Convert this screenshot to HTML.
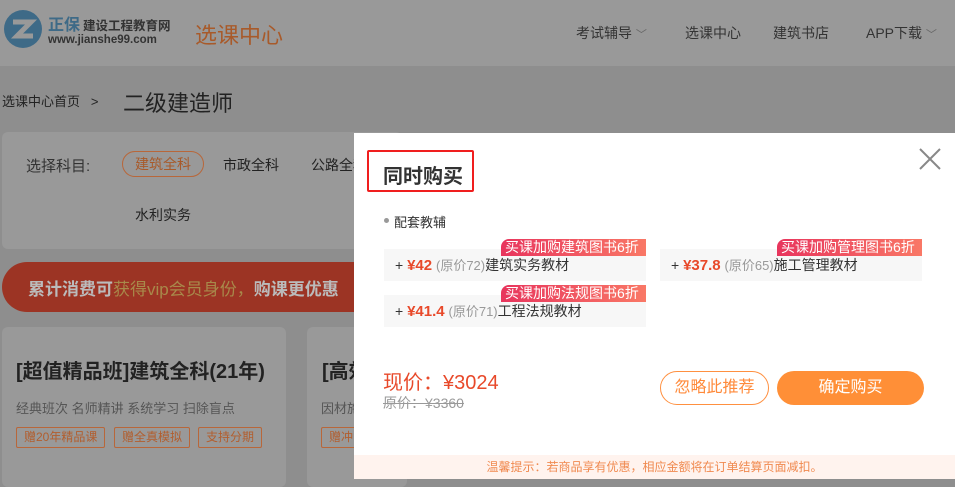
<!DOCTYPE html>
<html><head><meta charset="utf-8"><style>
*{margin:0;padding:0;box-sizing:border-box}
body{width:955px;height:482px;overflow:hidden;background:#8e8e8e;font-family:"Liberation Sans","Noto Sans CJK SC",sans-serif;position:relative;color:#222}
.a{position:absolute;white-space:nowrap}
.hdr{left:0;top:0;width:955px;height:66px;background:#999}
.card{background:#999;border-radius:6px}
.tag{border:1px solid #b8673a;color:#b25e2e;font-size:12px;height:21px;line-height:19px;padding:0 7px;border-radius:2px}
.modal{left:354px;top:133px;width:601px;height:346px;background:#fff}
.item{background:#f7f7f7;height:32px;font-size:14px;color:#333;line-height:32px;padding-left:11px}
.item b{color:#e8492a;font-size:15px}
.item i{font-style:normal;color:#999;font-size:13px}
.badge{height:17px;line-height:17px;font-size:14px;color:#fff;padding:0 4px;border-radius:8px 0 0 0;background:linear-gradient(90deg,#e8355d,#f97866)}
</style></head><body>
<div class="a hdr"></div>
<svg class="a" style="left:3px;top:9px" width="40" height="40"><circle cx="20" cy="20" r="19" fill="#3e6a87"/><path d="M10 13h18l-14 14h16" stroke="#999" stroke-width="5" fill="none"/></svg>
<div class="a" style="left:48px;top:11px;font-size:16px;font-weight:bold;color:#3e6a87">正保</div>
<div class="a" style="left:83px;top:15px;font-size:12.5px;font-weight:bold;color:#333">建设工程教育网</div>
<div class="a" style="left:48px;top:34px;font-size:11.5px;font-weight:bold;color:#333">www.jianshe99.com</div>
<div class="a" style="left:195px;top:18px;font-size:22px;color:#a85a2a">选课中心</div>
<div class="a" style="left:576px;top:23px;font-size:14px;color:#333">考试辅导 <span style="color:#666;font-size:11px">﹀</span></div>
<div class="a" style="left:685px;top:23px;font-size:14px;color:#333">选课中心</div>
<div class="a" style="left:773px;top:23px;font-size:14px;color:#333">建筑书店</div>
<div class="a" style="left:866px;top:23px;font-size:14px;color:#333">APP下载 <span style="color:#666;font-size:11px">﹀</span></div>
<div class="a" style="left:2px;top:91px;font-size:13px;color:#222">选课中心首页 &nbsp;&nbsp;&gt;</div>
<div class="a" style="left:123px;top:86px;font-size:22px;color:#222">二级建造师</div>
<div class="a card" style="left:2px;top:132px;width:400px;height:117px"></div>
<div class="a" style="left:26px;top:155px;font-size:15px;color:#333">选择科目:</div>
<div class="a" style="left:122px;top:151px;width:82px;height:26px;border:1px solid #b8673a;border-radius:13px;color:#a85a2a;font-size:14px;line-height:24px;text-align:center">建筑全科</div>
<div class="a" style="left:223px;top:155px;font-size:14px">市政全科</div>
<div class="a" style="left:311px;top:155px;font-size:14px">公路全科</div>
<div class="a" style="left:135px;top:205px;font-size:14px">水利实务</div>
<div class="a" style="left:2px;top:262px;width:400px;height:50px;border-radius:25px;background:#9c3424"></div>
<div class="a" style="left:28px;top:275px;font-size:17px;font-weight:bold;color:#bbb">累计消费可<span style="font-weight:normal;color:#a8894a">获得vip会员身份，</span>购课更优惠</div>
<div class="a card" style="left:2px;top:327px;width:284px;height:160px"></div>
<div class="a card" style="left:307px;top:327px;width:100px;height:160px"></div>
<div class="a" style="left:16px;top:355px;font-size:20px;font-weight:bold;color:#222">[超值精品班]建筑全科(21年)</div>
<div class="a" style="left:322px;top:355px;font-size:20px;font-weight:bold;color:#222">[高效</div>
<div class="a" style="left:16px;top:398px;font-size:13px;color:#555">经典班次 名师精讲 系统学习 扫除盲点</div>
<div class="a" style="left:321px;top:398px;font-size:13px;color:#555">因材施</div>
<div class="a tag" style="left:16px;top:427px">赠20年精品课</div>
<div class="a tag" style="left:114px;top:427px">赠全真模拟</div>
<div class="a tag" style="left:198px;top:427px">支持分期</div>
<div class="a tag" style="left:321px;top:427px">赠冲</div>

<div class="a modal"></div>
<div class="a" style="left:367px;top:150px;width:107px;height:42px;border:2px solid #f01e1e;border-radius:2px"></div>
<div class="a" style="left:383px;top:160px;font-size:20px;font-weight:bold;color:#333">同时购买</div>
<svg class="a" style="left:918px;top:147px" width="24" height="24"><path d="M2 2L22 22M22 2L2 22" stroke="#888" stroke-width="2"/></svg>
<div class="a" style="left:384px;top:218px;width:5px;height:5px;border-radius:50%;background:#999"></div>
<div class="a" style="left:394px;top:212px;font-size:13px;color:#333">配套教辅</div>
<div class="a item" style="left:384px;top:249px;width:262px">+ <b>¥42</b> <i>(原价72)</i>建筑实务教材</div>
<div class="a badge" style="left:501px;top:239px;width:145px">买课加购建筑图书6折</div>
<div class="a item" style="left:660px;top:249px;width:262px">+ <b>¥37.8</b> <i>(原价65)</i>施工管理教材</div>
<div class="a badge" style="left:777px;top:239px;width:145px">买课加购管理图书6折</div>
<div class="a item" style="left:384px;top:295px;width:262px">+ <b>¥41.4</b> <i>(原价71)</i>工程法规教材</div>
<div class="a badge" style="left:501px;top:285px;width:145px">买课加购法规图书6折</div>
<div class="a" style="left:383px;top:366px;font-size:20px;color:#e8492a">现价：¥3024</div>
<div class="a" style="left:383px;top:393px;font-size:14px;color:#999;text-decoration:line-through">原价：¥3360</div>
<div class="a" style="left:660px;top:371px;width:109px;height:34px;border:1px solid #ff9040;border-radius:17px;color:#ff8a3a;font-size:16px;line-height:32px;text-align:center">忽略此推荐</div>
<div class="a" style="left:777px;top:371px;width:147px;height:34px;background:#ff8f37;border-radius:17px;color:#fff;font-size:16px;line-height:34px;text-align:center">确定购买</div>
<div class="a" style="left:354px;top:455px;width:601px;height:24px;background:#fff3ee;color:#f08a50;font-size:12px;line-height:24px;text-align:center">温馨提示：若商品享有优惠，相应金额将在订单结算页面减扣。</div>
</body></html>
